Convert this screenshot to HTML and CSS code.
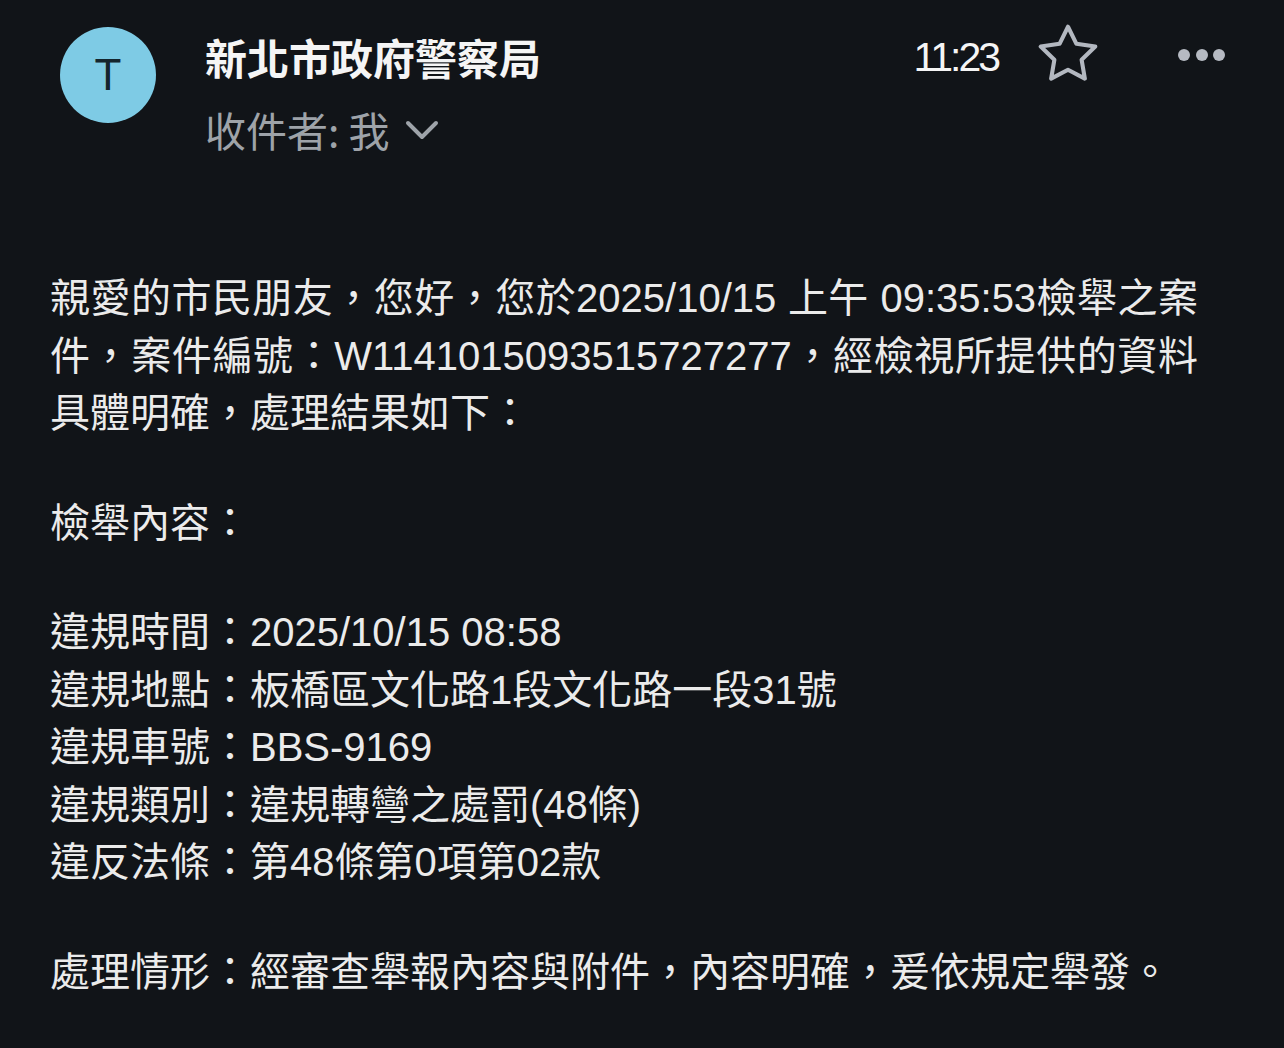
FILE: index.html
```html
<!DOCTYPE html>
<html lang="zh-Hant">
<head>
    <meta charset="UTF-8">
    <meta name="viewport" content="width=device-width, initial-scale=1.0">
    <title>新北市政府警察局</title>
    <link rel="stylesheet" href="styles.css">
</head>
<body>
    <div class="mail">
        <div class="mail-head">
            <div class="avatar">T</div>
            <div class="sender">
                <div class="sender-name">新北市政府警察局</div>
                <div class="to">
                    <span>收件者: 我</span>
                    <svg class="chevron" width="36" height="24" viewBox="0 0 36 24">
                        <polyline points="4,5 18,19 32,5" fill="none" stroke="#9ea3a9" stroke-width="4" stroke-linecap="round" stroke-linejoin="round"/>
                    </svg>
                </div>
            </div>
            <div class="meta">
                <span class="time">11:23</span>
                <svg class="star" width="60" height="60" viewBox="1 1 22 22">
                    <path d="M12 2l3.09 6.26L22 9.27l-5 4.87 1.18 6.88L12 17.77l-6.18 3.25L7 14.14 2 9.27l6.91-1.01L12 2z" fill="none" stroke="#b3b8c0" stroke-width="1.5" stroke-linejoin="round"/>
                </svg>
                <div class="dots"><span></span><span></span><span></span></div>
            </div>
        </div>

        <div class="mail-body">
            <p>親愛的市民朋友，您好，您於2025/10/15 上午 09:35:53檢舉之案件，案件編號：W1141015093515727277，經檢視所提供的資料具體明確，處理結果如下：</p>
            <p>檢舉內容：</p>
            <p>違規時間：2025/10/15 08:58<br>
               違規地點：板橋區文化路1段文化路一段31號<br>
               違規車號：BBS-9169<br>
               違規類別：違規轉彎之處罰(48條)<br>
               違反法條：第48條第0項第02款</p>
            <p class="last">處理情形：經審查舉報內容與附件，內容明確，爰依規定舉發。</p>
        </div>
    </div>
</body>
</html>
```

FILE: styles.css
```css
*{
    margin: 0;
    padding: 0;
    box-sizing: border-box;
}
body{
    background-color: #111418;
    font-family: "Liberation Sans", "Noto Sans CJK TC", sans-serif;
    color: #ebebeb;
}
.mail{
    width: 1284px;
    min-height: 1048px;
}
.mail-head{
    display: flex;
    align-items: flex-start;
    padding: 27px 59px 0 60px;
}
.avatar{
    width: 96px;
    height: 96px;
    border-radius: 50%;
    background-color: #7ecbe5;
    color: #14252d;
    font-size: 44px;
    line-height: 96px;
    text-align: center;
}
.sender{
    margin-left: 49px;
}
.sender-name{
    font-family: "Noto Sans CJK TC", sans-serif;
    font-weight: bold;
    font-size: 42px;
    line-height: 60px;
    color: #f5f5f5;
}
.to{
    margin-top: 12px;
    font-family: "Noto Sans CJK TC", sans-serif;
    font-size: 41px;
    line-height: 60px;
    color: #9ea3a9;
    display: flex;
    align-items: center;
}
.chevron{
    margin-left: 14px;
    margin-top: 2px;
}
.meta{
    margin-left: auto;
    display: flex;
    align-items: center;
    height: 60px;
}
.time{
    font-size: 41px;
    letter-spacing: -3px;
    color: #f5f5f5;
}
.star{
    margin-left: 40px;
    margin-top: -6px;
}
.dots{
    display: flex;
    gap: 5.5px;
    margin-left: 80px;
    margin-top: -4px;
}
.dots span{
    width: 12px;
    height: 12px;
    border-radius: 50%;
    background-color: #b6bac2;
}
.mail-body{
    margin-top: 111px;
    padding: 0 86px 0 50px;
    font-size: 40px;
    line-height: 57.5px;
    text-align: justify;
}
.mail-body p{
    margin-bottom: 52px;
}
.mail-body p.last{
    margin-bottom: 0;
}
```
